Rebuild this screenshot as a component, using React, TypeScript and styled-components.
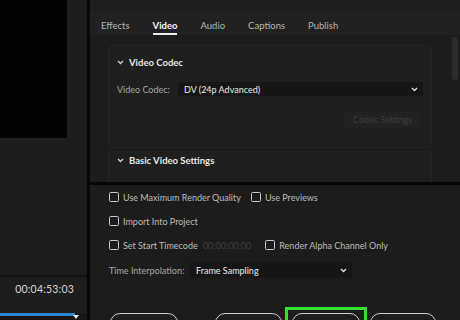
import React from 'react';
import styled, { createGlobalStyle } from 'styled-components';

const GlobalStyle = createGlobalStyle`
  html, body {
    margin: 0;
    padding: 0;
    background: #1c1c1c;
    overflow: hidden;
  }
  * {
    box-sizing: border-box;
  }
`;

const tabs = ['Effects', 'Video', 'Audio', 'Captions', 'Publish'];

const Chevron: React.FC<{ color?: string }> = ({ color = '#cfcfcf' }) => (
  <svg width="7" height="5" viewBox="0 0 7 5">
    <path d="M1 1 L3.5 3.5 L6 1" stroke={color} strokeWidth="1.3" fill="none" />
  </svg>
);

const App: React.FC = () => {
  return (
    <>
      <GlobalStyle />
      <Screen>
        <LeftPanel>
          <VideoFrame />
          <LeftFill />
          <TimeRow>
            <Timecode>00:04:53:03</Timecode>
          </TimeRow>
          <Progress>
            <ProgressBar style={{ width: 75 }} />
            <Playhead />
          </Progress>
        </LeftPanel>
        <VDivider />
        <RightPanel>
          <TopPane>
            <TabBar>
              {tabs.map((tab) => (
                <Tab key={tab} $active={tab === 'Video'}>
                  {tab}
                </Tab>
              ))}
            </TabBar>
            <ScrollArea>
              <ScrollContent>
                <Section>
                  <SectionHeader>
                    <Chevron />
                    <span>Video Codec</span>
                  </SectionHeader>
                  <FieldRow>
                    <FieldLabel>Video Codec:</FieldLabel>
                    <Select>
                      <span>DV (24p Advanced)</span>
                      <Chevron color="#e0e0e0" />
                    </Select>
                  </FieldRow>
                  <ButtonRow>
                    <GhostButton>Codec Settings</GhostButton>
                  </ButtonRow>
                </Section>
                <Section $cut>
                  <SectionHeader>
                    <Chevron />
                    <span>Basic Video Settings</span>
                  </SectionHeader>
                </Section>
              </ScrollContent>
              <ScrollTrack>
                <ScrollThumb />
              </ScrollTrack>
            </ScrollArea>
          </TopPane>
          <HDivider />
          <BottomPane>
            <OptionRow>
              <Check>
                <Box />
                <span>Use Maximum Render Quality</span>
              </Check>
              <Check>
                <Box />
                <span>Use Previews</span>
              </Check>
            </OptionRow>
            <OptionRow>
              <Check>
                <Box />
                <span>Import Into Project</span>
              </Check>
            </OptionRow>
            <OptionRow>
              <Check>
                <Box />
                <span>Set Start Timecode</span>
              </Check>
              <FaintTime>00:00:00:00</FaintTime>
              <Check $ml={4}>
                <Box />
                <span>Render Alpha Channel Only</span>
              </Check>
            </OptionRow>
            <InterpRow>
              <FieldLabel $w={81}>Time Interpolation:</FieldLabel>
              <SmallSelect>
                <span>Frame Sampling</span>
                <Chevron color="#e0e0e0" />
              </SmallSelect>
            </InterpRow>
            <Actions>
              <ActionButton $w={68} />
              <ActionButton $w={67} $ml={37} />
              <Highlight>
                <ActionButton $w={68} />
              </Highlight>
              <ActionButton $w={66} $ml={3} />
            </Actions>
          </BottomPane>
        </RightPanel>
      </Screen>
    </>
  );
};

export default App;

const Screen = styled.div`
  width: 460px;
  height: 320px;
  display: flex;
  font-family: Lato, 'Liberation Sans', sans-serif;
  font-size: 9px;
  color: #b4b4b4;
  overflow: hidden;
`;

const LeftPanel = styled.div`
  width: 87px;
  display: flex;
  flex-direction: column;
  background: #1d1d1d;
`;

const VideoFrame = styled.div`
  width: 67px;
  height: 138px;
  background: #020202;
`;

const LeftFill = styled.div`
  flex: 1;
  border-bottom: 2px solid #111;
`;

const TimeRow = styled.div`
  height: 36px;
  display: flex;
  align-items: center;
  justify-content: flex-end;
  padding: 0 13px 12px 0;
`;

const Timecode = styled.span`
  font-size: 10.5px;
  color: #d8d8d8;
  letter-spacing: 0.2px;
`;

const Progress = styled.div`
  height: 7px;
  position: relative;
  background: #161616;
`;

const ProgressBar = styled.div`
  height: 3px;
  background: #2f86d6;
`;

const Playhead = styled.div`
  position: absolute;
  left: 73px;
  top: 2px;
  width: 0;
  height: 0;
  border-left: 3px solid transparent;
  border-right: 3px solid transparent;
  border-top: 4px solid #e8e8e8;
`;

const VDivider = styled.div`
  width: 3px;
  background: #080808;
`;

const RightPanel = styled.div`
  flex: 1;
  display: flex;
  flex-direction: column;
  background: #1c1c1c;
`;

const TopPane = styled.div`
  height: 182px;
  flex-shrink: 0;
  display: flex;
  flex-direction: column;
  overflow: hidden;
`;

const TabBar = styled.div`
  height: 35px;
  flex-shrink: 0;
  padding-left: 11px;
  display: flex;
  align-items: flex-end;
  gap: 23px;
  background: #212121;
  border-top: 10px solid #1e1e1e;
`;

const Tab = styled.div<{ $active?: boolean }>`
  height: 25px;
  padding: 10px 0 1px;
  line-height: 12px;
  color: ${(p) => (p.$active ? '#f2f2f2' : '#b6b6b6')};
  font-weight: ${(p) => (p.$active ? 700 : 400)};
  border-bottom: 2px solid ${(p) => (p.$active ? '#ececec' : 'transparent')};
  font-size: 9.5px;
`;

const ScrollArea = styled.div`
  flex: 1;
  display: flex;
  min-height: 0;
`;

const ScrollContent = styled.div`
  flex: 1;
  padding: 10px 18px 0 18px;
  display: flex;
  flex-direction: column;
  gap: 3px;
`;

const Section = styled.div<{ $cut?: boolean }>`
  flex-shrink: 0;
  background: #1f1f1f;
  border: 1px solid #242424;
  border-radius: 4px;
  padding: 9px 8px 19px 8px;
  ${(p) => (p.$cut ? 'padding-top: 1px; padding-bottom: 20px; border-bottom: none;' : '')}
`;

const SectionHeader = styled.div`
  height: 14px;
  display: flex;
  align-items: center;
  gap: 5px;
  font-weight: 700;
  font-size: 9.5px;
  color: #e6e6e6;
`;

const FieldRow = styled.div`
  margin-top: 13px;
  display: flex;
  align-items: center;
`;

const FieldLabel = styled.span<{ $w?: number }>`
  width: ${(p) => p.$w ?? 61}px;
  flex-shrink: 0;
  color: #a8a8a8;
`;

const Select = styled.div`
  flex: 1;
  height: 14px;
  background: #161616;
  display: flex;
  align-items: center;
  justify-content: space-between;
  padding: 0 5px 0 6px;
  color: #ededed;
`;

const ButtonRow = styled.div`
  margin-top: 15px;
  display: flex;
  justify-content: flex-end;
`;

const GhostButton = styled.div`
  width: 81px;
  height: 17px;
  border-radius: 9px;
  background: #222;
  color: #3d3d3d;
  display: flex;
  align-items: center;
  justify-content: center;
`;

const ScrollTrack = styled.div`
  width: 10px;
  padding: 2px 2px 0 2px;
`;

const ScrollThumb = styled.div`
  width: 6px;
  height: 43px;
  border-radius: 3px;
  background: #2c2c2c;
`;

const HDivider = styled.div`
  height: 3px;
  flex-shrink: 0;
  background: #080808;
`;

const BottomPane = styled.div`
  flex: 1;
  min-height: 0;
  display: flex;
  flex-direction: column;
  padding-left: 19px;
`;

const OptionRow = styled.div`
  height: 24px;
  flex-shrink: 0;
  display: flex;
  align-items: center;
  gap: 10px;
`;

const Check = styled.label<{ $ml?: number }>`
  display: flex;
  align-items: center;
  gap: 4px;
  color: #bdbdbd;
  margin-left: ${(p) => p.$ml ?? 0}px;
`;

const Box = styled.span`
  width: 10px;
  height: 10px;
  border: 1.5px solid #c8c8c8;
  border-radius: 1.5px;
`;

const FaintTime = styled.span`
  color: #3c3c3c;
  margin-left: -5px;
`;

const InterpRow = styled.div`
  height: 26px;
  flex-shrink: 0;
  display: flex;
  align-items: center;
`;

const SmallSelect = styled(Select)`
  flex: 0 0 162px;
  height: 16px;
`;

const Actions = styled.div`
  margin-top: 24px;
  flex-shrink: 0;
  display: flex;
  align-items: flex-start;
  padding-left: 1px;
`;

const ActionButton = styled.div<{ $w: number; $ml?: number }>`
  width: ${(p) => p.$w}px;
  height: 20px;
  margin-top: 6px;
  margin-left: ${(p) => p.$ml ?? 0}px;
  border: 1.5px solid #cfcfcf;
  border-radius: 10px;
`;

const Highlight = styled.div`
  margin-left: 3px;
  padding: 0 4px;
  border: 3px solid #35e035;
  border-bottom: none;
  height: 30px;

  ${ActionButton} {
    margin-top: 3px;
  }
`;
